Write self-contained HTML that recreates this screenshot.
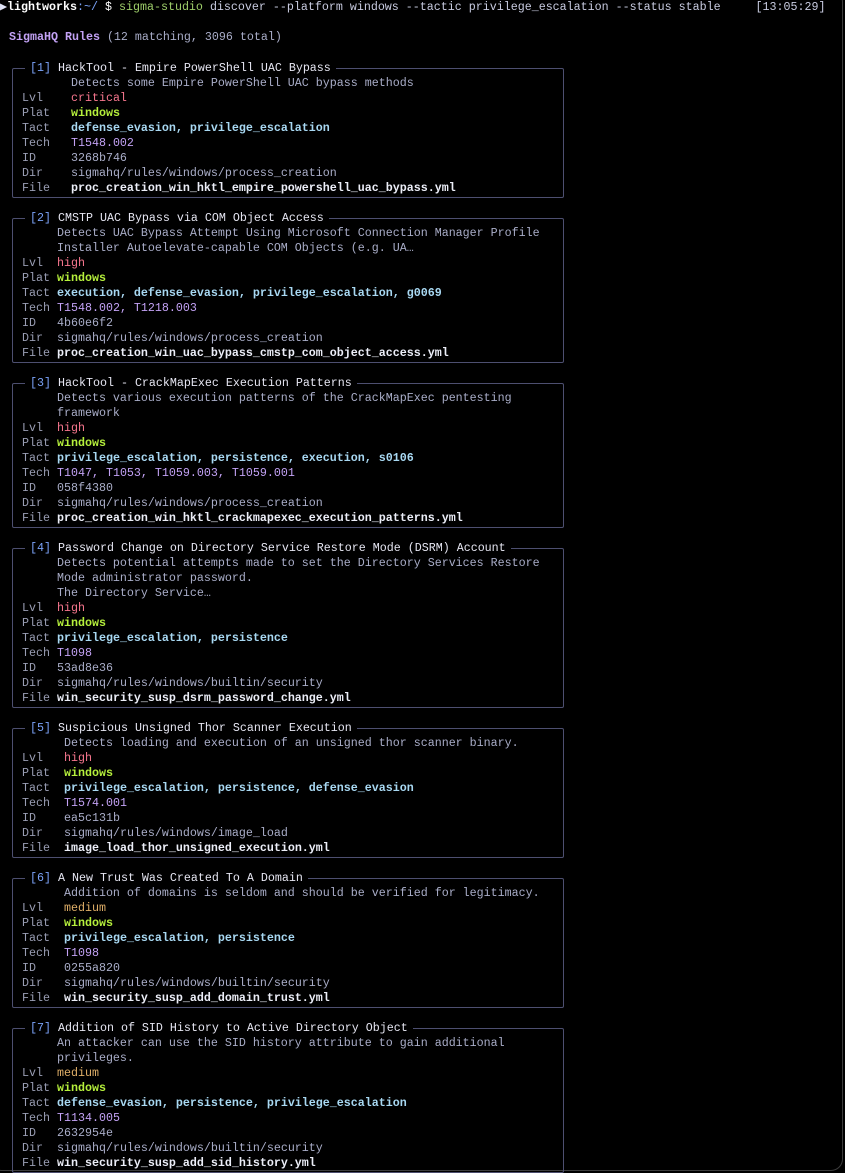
<!DOCTYPE html>
<html><head><meta charset="utf-8"><style>
html,body{margin:0;padding:0;background:#000;width:845px;height:1173px;overflow:hidden;position:relative}
body{font-family:"Liberation Mono","DejaVu Sans Mono",monospace;font-size:11.67px;line-height:15px;color:#c8cbe0}
.ln{position:absolute;white-space:pre;height:15px}
.frame{position:absolute;left:-10px;top:-10px;width:851px;height:1179px;border:1px solid #3c3c3c;border-radius:12px;pointer-events:none}
.box{position:absolute;left:12px;width:552px;box-sizing:border-box;border:1px solid #4d4f70;border-radius:2px;padding:7px 0 1px 9px}
.box .t{position:absolute;top:-8px;left:12px;padding:0 5px;background:#000;white-space:pre;color:#e6e6f2}
.box div.r{white-space:pre;height:15px}
.n{color:#7aa2f7}
.d{color:#a9adc8}
.l{color:#9a9eb4}
.crit,.hi{color:#f7768e}
.med{color:#e0af68}
.win{color:#b6f03c;font-weight:bold}
.ta{color:#a8d8f2;font-weight:bold}
.te{color:#c3a2f5}
.g{color:#a9adc8}
.f{color:#eceef8;font-weight:bold}
</style></head><body>
<div class="frame"></div>
<div class="ln" style="top:0;left:0"><span style="color:#dfe2f5">▶</span><span style="color:#fff;font-weight:bold">lightworks</span><span style="color:#7aa2f7">:~/</span> <span style="color:#fff">$</span> <span style="color:#9ece6a">sigma-studio</span> <span style="color:#c8cbe0">discover --platform windows --tactic privilege_escalation --status stable     [13:05:29]</span></div>
<div class="ln" style="top:30px;left:9px"><span style="color:#c3a2f5;font-weight:bold">SigmaHQ Rules</span> <span style="color:#a9adc8">(12 matching, 3096 total)</span></div>

<div class="box" style="top:68px">
<span class="t"><span class="n">[1]</span> HackTool - Empire PowerShell UAC Bypass</span>
<div class="r d">       Detects some Empire PowerShell UAC bypass methods</div>
<div class="r"><span class="l">Lvl    </span><span class="crit">critical</span></div>
<div class="r"><span class="l">Plat   </span><span class="win">windows</span></div>
<div class="r"><span class="l">Tact   </span><span class="ta">defense_evasion, privilege_escalation</span></div>
<div class="r"><span class="l">Tech   </span><span class="te">T1548.002</span></div>
<div class="r"><span class="l">ID     </span><span class="g">3268b746</span></div>
<div class="r"><span class="l">Dir    </span><span class="g">sigmahq/rules/windows/process_creation</span></div>
<div class="r"><span class="l">File   </span><span class="f">proc_creation_win_hktl_empire_powershell_uac_bypass.yml</span></div>
</div>

<div class="box" style="top:218px">
<span class="t"><span class="n">[2]</span> CMSTP UAC Bypass via COM Object Access</span>
<div class="r d">     Detects UAC Bypass Attempt Using Microsoft Connection Manager Profile</div>
<div class="r d">     Installer Autoelevate-capable COM Objects (e.g. UA…</div>
<div class="r"><span class="l">Lvl  </span><span class="hi">high</span></div>
<div class="r"><span class="l">Plat </span><span class="win">windows</span></div>
<div class="r"><span class="l">Tact </span><span class="ta">execution, defense_evasion, privilege_escalation, g0069</span></div>
<div class="r"><span class="l">Tech </span><span class="te">T1548.002, T1218.003</span></div>
<div class="r"><span class="l">ID   </span><span class="g">4b60e6f2</span></div>
<div class="r"><span class="l">Dir  </span><span class="g">sigmahq/rules/windows/process_creation</span></div>
<div class="r"><span class="l">File </span><span class="f">proc_creation_win_uac_bypass_cmstp_com_object_access.yml</span></div>
</div>

<div class="box" style="top:383px">
<span class="t"><span class="n">[3]</span> HackTool - CrackMapExec Execution Patterns</span>
<div class="r d">     Detects various execution patterns of the CrackMapExec pentesting</div>
<div class="r d">     framework</div>
<div class="r"><span class="l">Lvl  </span><span class="hi">high</span></div>
<div class="r"><span class="l">Plat </span><span class="win">windows</span></div>
<div class="r"><span class="l">Tact </span><span class="ta">privilege_escalation, persistence, execution, s0106</span></div>
<div class="r"><span class="l">Tech </span><span class="te">T1047, T1053, T1059.003, T1059.001</span></div>
<div class="r"><span class="l">ID   </span><span class="g">058f4380</span></div>
<div class="r"><span class="l">Dir  </span><span class="g">sigmahq/rules/windows/process_creation</span></div>
<div class="r"><span class="l">File </span><span class="f">proc_creation_win_hktl_crackmapexec_execution_patterns.yml</span></div>
</div>

<div class="box" style="top:548px">
<span class="t"><span class="n">[4]</span> Password Change on Directory Service Restore Mode (DSRM) Account</span>
<div class="r d">     Detects potential attempts made to set the Directory Services Restore</div>
<div class="r d">     Mode administrator password.</div>
<div class="r d">     The Directory Service…</div>
<div class="r"><span class="l">Lvl  </span><span class="hi">high</span></div>
<div class="r"><span class="l">Plat </span><span class="win">windows</span></div>
<div class="r"><span class="l">Tact </span><span class="ta">privilege_escalation, persistence</span></div>
<div class="r"><span class="l">Tech </span><span class="te">T1098</span></div>
<div class="r"><span class="l">ID   </span><span class="g">53ad8e36</span></div>
<div class="r"><span class="l">Dir  </span><span class="g">sigmahq/rules/windows/builtin/security</span></div>
<div class="r"><span class="l">File </span><span class="f">win_security_susp_dsrm_password_change.yml</span></div>
</div>

<div class="box" style="top:728px">
<span class="t"><span class="n">[5]</span> Suspicious Unsigned Thor Scanner Execution</span>
<div class="r d">      Detects loading and execution of an unsigned thor scanner binary.</div>
<div class="r"><span class="l">Lvl   </span><span class="hi">high</span></div>
<div class="r"><span class="l">Plat  </span><span class="win">windows</span></div>
<div class="r"><span class="l">Tact  </span><span class="ta">privilege_escalation, persistence, defense_evasion</span></div>
<div class="r"><span class="l">Tech  </span><span class="te">T1574.001</span></div>
<div class="r"><span class="l">ID    </span><span class="g">ea5c131b</span></div>
<div class="r"><span class="l">Dir   </span><span class="g">sigmahq/rules/windows/image_load</span></div>
<div class="r"><span class="l">File  </span><span class="f">image_load_thor_unsigned_execution.yml</span></div>
</div>

<div class="box" style="top:878px">
<span class="t"><span class="n">[6]</span> A New Trust Was Created To A Domain</span>
<div class="r d">      Addition of domains is seldom and should be verified for legitimacy.</div>
<div class="r"><span class="l">Lvl   </span><span class="med">medium</span></div>
<div class="r"><span class="l">Plat  </span><span class="win">windows</span></div>
<div class="r"><span class="l">Tact  </span><span class="ta">privilege_escalation, persistence</span></div>
<div class="r"><span class="l">Tech  </span><span class="te">T1098</span></div>
<div class="r"><span class="l">ID    </span><span class="g">0255a820</span></div>
<div class="r"><span class="l">Dir   </span><span class="g">sigmahq/rules/windows/builtin/security</span></div>
<div class="r"><span class="l">File  </span><span class="f">win_security_susp_add_domain_trust.yml</span></div>
</div>

<div class="box" style="top:1028px">
<span class="t"><span class="n">[7]</span> Addition of SID History to Active Directory Object</span>
<div class="r d">     An attacker can use the SID history attribute to gain additional</div>
<div class="r d">     privileges.</div>
<div class="r"><span class="l">Lvl  </span><span class="med">medium</span></div>
<div class="r"><span class="l">Plat </span><span class="win">windows</span></div>
<div class="r"><span class="l">Tact </span><span class="ta">defense_evasion, persistence, privilege_escalation</span></div>
<div class="r"><span class="l">Tech </span><span class="te">T1134.005</span></div>
<div class="r"><span class="l">ID   </span><span class="g">2632954e</span></div>
<div class="r"><span class="l">Dir  </span><span class="g">sigmahq/rules/windows/builtin/security</span></div>
<div class="r"><span class="l">File </span><span class="f">win_security_susp_add_sid_history.yml</span></div>
</div>
</body></html>
